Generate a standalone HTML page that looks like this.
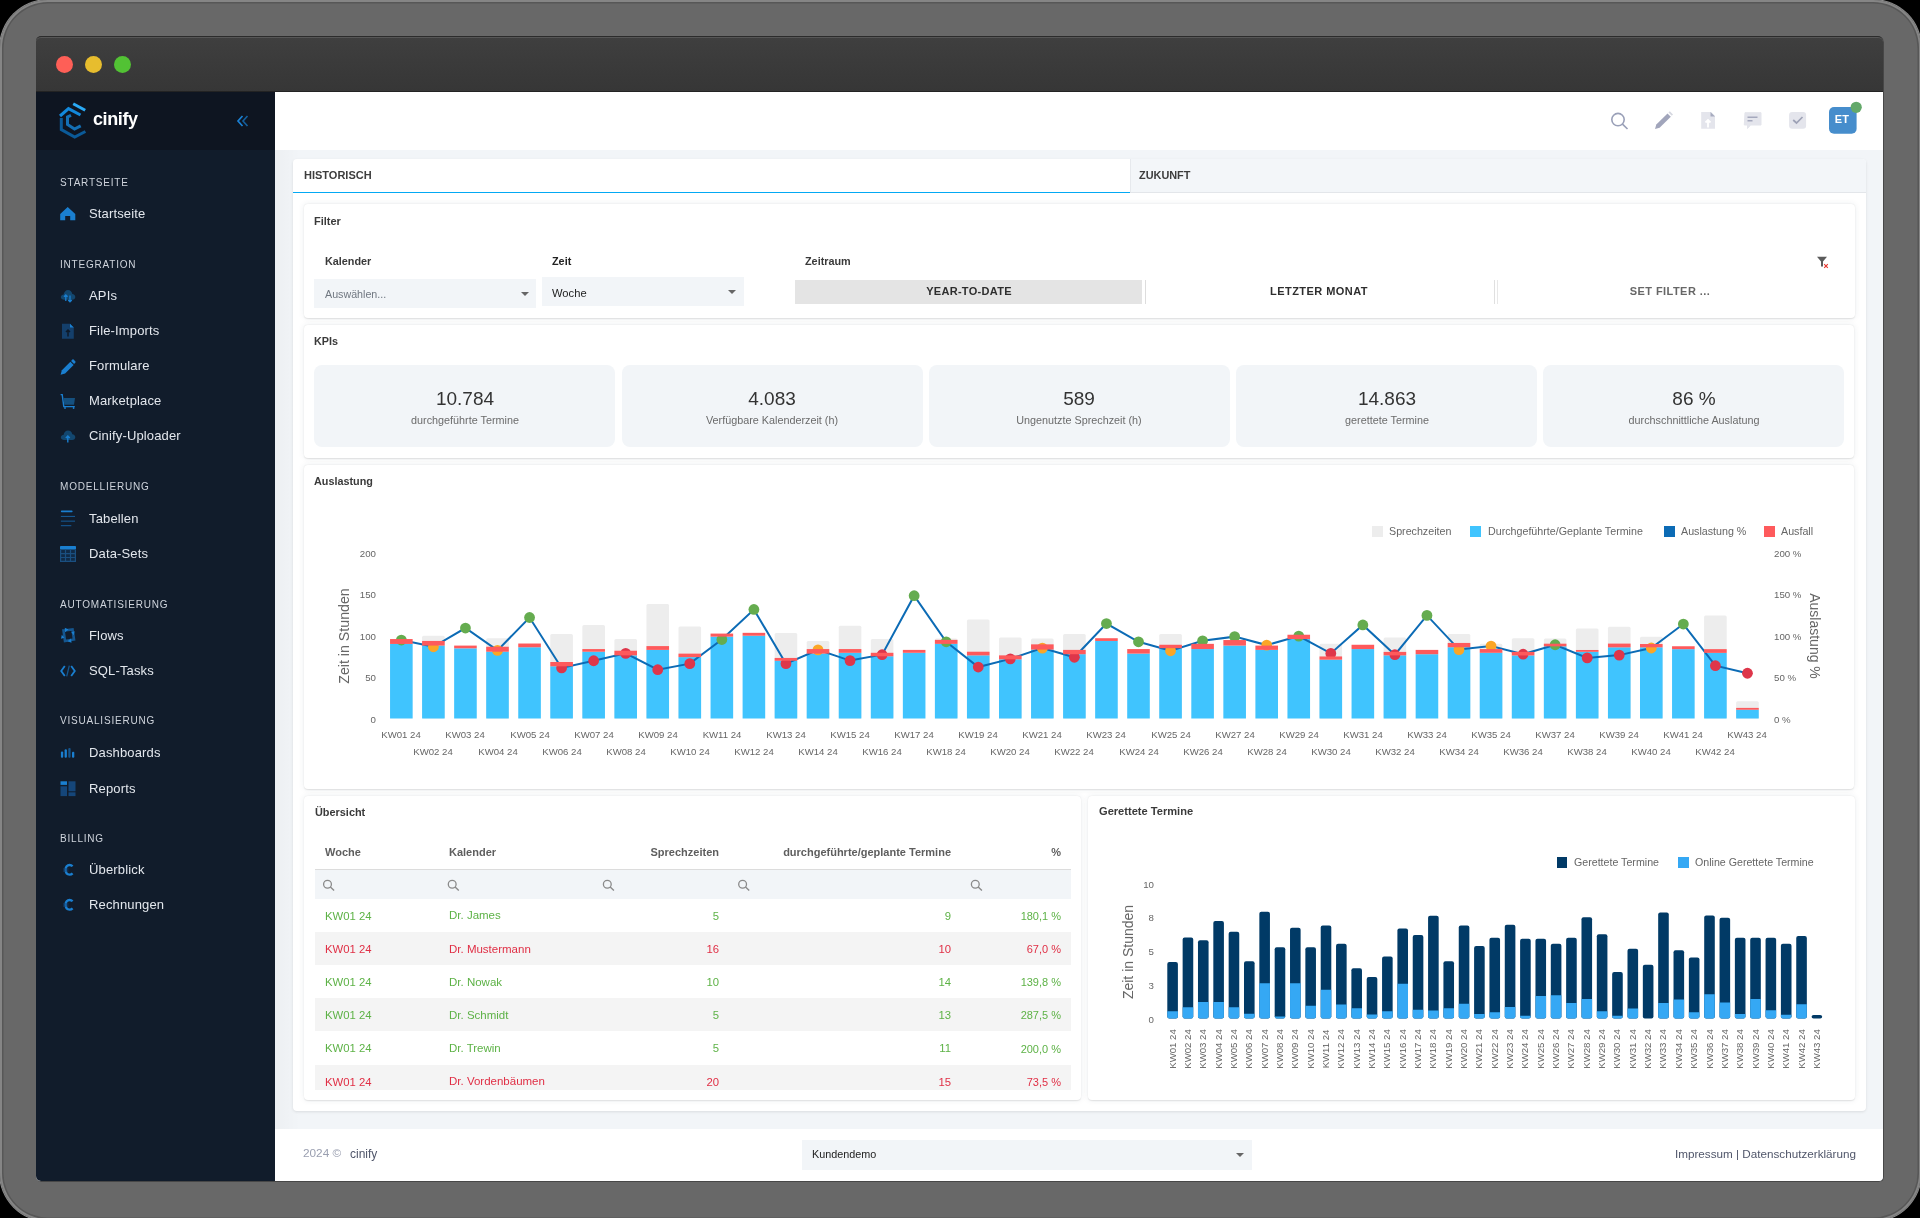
<!DOCTYPE html><html><head><meta charset="utf-8"><style>
*{margin:0;padding:0;box-sizing:border-box}
html,body{width:1920px;height:1218px;overflow:hidden;background:#000;font-family:"Liberation Sans", sans-serif}
.t{position:absolute;white-space:nowrap;will-change:transform}
.r{position:absolute}
svg{position:absolute}
</style></head><body>
<div class="r" style="left:0px;top:0px;width:1921px;height:1221px;background:#686868;border-radius:48px;box-shadow:0 0 0 1px rgba(255,255,255,0.55), inset 0 0 0 2px #858585, inset 0 0 0 3.5px #575757;"></div><div class="r" style="left:36px;top:37px;width:1848px;height:1145px;background:#f2f5f8;border-radius:5px;overflow:hidden;border-right:1px solid #474747;border-bottom:1px solid #474747;"></div><div class="r" style="left:36px;top:36px;width:1847px;height:55.5px;background:linear-gradient(#3f3f3f,#363636);border-radius:5px 5px 0 0;border-top:1px solid #2b2b2b;box-shadow:inset 0 1px 0 #565656, inset 0 -1px 0 #232323;"></div><div class="r" style="left:55.5px;top:55.5px;width:17.0px;height:17.0px;background:#fe5f57;border-radius:50%;"></div><div class="r" style="left:84.5px;top:55.5px;width:17.0px;height:17.0px;background:#e7bd2e;border-radius:50%;"></div><div class="r" style="left:113.5px;top:55.5px;width:17.0px;height:17.0px;background:#52c234;border-radius:50%;"></div><div class="r" style="left:36px;top:91.5px;width:239px;height:1089.5px;background:#111c2b;border-bottom-left-radius:5px;"></div><div class="r" style="left:36px;top:91.5px;width:239px;height:58.5px;background:#0e1521;"></div><div class="r" style="left:275px;top:150px;width:25px;height:978.5px;background:linear-gradient(90deg,rgba(0,0,0,0.025),rgba(0,0,0,0));"></div><div class="r" style="left:275px;top:91.5px;width:1608px;height:58.5px;background:#ffffff;"></div><div class="r" style="left:275px;top:1128.5px;width:1608px;height:52.5px;background:#ffffff;border-bottom-right-radius:5px;"></div><svg style="left:56px;top:100px" width="34" height="42" viewBox="56 100 34 42">
<path d="M73.2 103.8 L85.2 110.3" stroke="#2aaaf5" stroke-width="3" fill="none"/>
<path d="M60 116 L68.5 108.6 L80.5 115" stroke="#1289dc" stroke-width="3" fill="none"/>
<path d="M61.3 118 L61.3 129.5 L74.7 137 L85.4 131.5" stroke="#0b5a98" stroke-width="3" fill="none"/>
<path d="M71 115.3 L67.5 117 L67.5 124.5 L74.5 129 L80.7 125.8" stroke="#1470b5" stroke-width="3" fill="none"/>
</svg><div class="t" style="top:110.46px;font-size:18px;line-height:18px;color:#ffffff;font-weight:bold;letter-spacing:-0.4px;left:93.00px;">cinify</div><svg style="left:235px;top:113px" width="16" height="16" viewBox="0 0 16 16">
<path d="M7.5 3 L3 8 L7.5 13" stroke="#1a80d4" stroke-width="1.7" fill="none"/><path d="M12.5 3 L8 8 L12.5 13" stroke="#15609e" stroke-width="1.6" fill="none"/>
</svg><div class="t" style="top:177.53px;font-size:10px;line-height:10px;color:#cfd4dc;letter-spacing:0.8px;left:59.60px;">STARTSEITE</div><div class="t" style="top:207.00px;font-size:13px;line-height:13px;color:#e3e7ed;letter-spacing:0.15px;left:88.80px;">Startseite</div><svg style="left:60px;top:205.2px" width="16" height="18" viewBox="0 0 16 18" overflow="visible"><path d="M0.2 9 L7.7 2 L15.3 9 L15.3 15.3 L10.2 15.3 L10.2 11 L5.2 11 L5.2 15.3 L0.2 15.3 Z" fill="#1a7fd0"/></svg><div class="t" style="top:259.84px;font-size:10px;line-height:10px;color:#cfd4dc;letter-spacing:0.8px;left:59.60px;">INTEGRATION</div><div class="t" style="top:289.00px;font-size:13px;line-height:13px;color:#e3e7ed;letter-spacing:0.15px;left:88.80px;">APIs</div><svg style="left:60px;top:287.2px" width="16" height="18" viewBox="0 0 16 18" overflow="visible"><path d="M3.8 12.8 C1.3 12.8 0.6 10.8 0.9 9.6 C1.3 8.3 2.5 7.7 3.5 7.8 C3.9 5.1 5.7 3 8 3 C10.3 3 12 4.8 12.3 7 C14 7.1 15.3 8.3 15.3 10 C15.3 11.6 14 12.8 12.4 12.8 Z" fill="#13476f"/><path d="M5.8 14 L5.8 8 M4 9.8 L5.8 8 L7.6 9.8 M10 8.5 L10 14.8 M8.2 13 L10 14.8 L11.8 13" stroke="#1a7fd0" stroke-width="1.3" fill="none"/></svg><div class="t" style="top:324.00px;font-size:13px;line-height:13px;color:#e3e7ed;letter-spacing:0.15px;left:88.80px;">File-Imports</div><svg style="left:60px;top:322.2px" width="16" height="18" viewBox="0 0 16 18" overflow="visible"><path d="M2 1.8 L10 1.8 L13.8 5.6 L13.8 16.7 L2 16.7 Z" fill="#143f6b"/><path d="M10 1.8 L13.8 5.6 L10 5.6 Z" fill="#1a7fd0"/><path d="M8 14.5 L8 8 M6 10 L8 8 L10 10" stroke="#0e1a29" stroke-width="1.5" fill="none"/></svg><div class="t" style="top:359.30px;font-size:13px;line-height:13px;color:#e3e7ed;letter-spacing:0.15px;left:88.80px;">Formulare</div><svg style="left:60px;top:357.5px" width="16" height="18" viewBox="0 0 16 18" overflow="visible"><path d="M0.6 16.7 L1.87 12.17 L10.37 3.67 L13.63 6.93 L5.13 15.43 Z" fill="#1a7fd0"/><path d="M11.1 2.9 L12.4 1.6 Q13 1 13.6 1.6 L15.4 3.4 Q16 4 15.4 4.6 L14.1 5.9 Z" fill="#1a7fd0"/></svg><div class="t" style="top:393.70px;font-size:13px;line-height:13px;color:#e3e7ed;letter-spacing:0.15px;left:88.80px;">Marketplace</div><svg style="left:60px;top:391.9px" width="16" height="18" viewBox="0 0 16 18" overflow="visible"><path d="M0.6 2.6 L2.2 2.6 L3.8 14.6 L14.8 14.6" stroke="#1a7fd0" stroke-width="1.4" fill="none"/><path d="M3.4 6 L15 6 L14 12.8 L4.3 12.8 Z" fill="#15507f"/><circle cx="5" cy="16" r="0.9" fill="#1a7fd0"/><circle cx="13.6" cy="16" r="0.9" fill="#1a7fd0"/></svg><div class="t" style="top:429.00px;font-size:13px;line-height:13px;color:#e3e7ed;letter-spacing:0.15px;left:88.80px;">Cinify-Uploader</div><svg style="left:60px;top:427.2px" width="16" height="18" viewBox="0 0 16 18" overflow="visible"><path d="M3.8 13 C1.3 13 0.6 11 0.9 9.8 C1.3 8.5 2.5 7.9 3.5 8 C3.9 5.3 5.7 3.5 8 3.5 C10.3 3.5 12 5.2 12.3 7.3 C14 7.4 15.3 8.6 15.3 10.2 C15.3 11.8 14 13 12.4 13 Z" fill="#13476f"/><path d="M7.8 15.5 L7.8 9 M5.8 11 L7.8 9 L9.8 11" stroke="#1a7fd0" stroke-width="1.4" fill="none"/></svg><div class="t" style="top:481.54px;font-size:10px;line-height:10px;color:#cfd4dc;letter-spacing:0.8px;left:59.60px;">MODELLIERUNG</div><div class="t" style="top:512.00px;font-size:13px;line-height:13px;color:#e3e7ed;letter-spacing:0.15px;left:88.80px;">Tabellen</div><svg style="left:60px;top:510.2px" width="16" height="18" viewBox="0 0 16 18" overflow="visible"><rect x="0.9" y="0.6" width="11.7" height="1.6" rx="0.8" fill="#1a7fd0"/><rect x="0.9" y="5.9" width="14.1" height="1.1" fill="#15568f"/><rect x="0.9" y="10.6" width="14.1" height="1.1" fill="#15568f"/><rect x="0.9" y="15.1" width="10.4" height="1.1" fill="#15568f"/></svg><div class="t" style="top:547.00px;font-size:13px;line-height:13px;color:#e3e7ed;letter-spacing:0.15px;left:88.80px;">Data-Sets</div><svg style="left:60px;top:545.2px" width="16" height="18" viewBox="0 0 16 18" overflow="visible"><rect x="0" y="1.2" width="16" height="15.8" rx="1" fill="#102a46"/><rect x="0" y="1" width="16" height="3.6" rx="0.8" fill="#1a7fd0"/><path d="M0.6 4.6 L0.6 16.4 L15.4 16.4 L15.4 4.6 M0.6 8.6 L15.4 8.6 M0.6 12.5 L15.4 12.5 M5.5 4.6 L5.5 16.4 M10.5 4.6 L10.5 16.4" stroke="#1a4f80" stroke-width="1.2" fill="none"/></svg><div class="t" style="top:599.53px;font-size:10px;line-height:10px;color:#cfd4dc;letter-spacing:0.8px;left:59.60px;">AUTOMATISIERUNG</div><div class="t" style="top:629.00px;font-size:13px;line-height:13px;color:#e3e7ed;letter-spacing:0.15px;left:88.80px;">Flows</div><svg style="left:60px;top:627.2px" width="16" height="18" viewBox="0 0 16 18" overflow="visible"><path d="M3.5 3.5 L12.5 2.5 L14 12.5 L5 14 Z" fill="none" stroke="#15568f" stroke-width="2.6"/><path d="M4.8 0.8 L8.5 2.6 L5 5.2 Z M14.6 4.2 L13.8 8.2 L11.3 5.2 Z M11.5 15.8 L7.5 14.2 L11 11.5 Z M1 11.8 L1.8 7.8 L4.4 10.8 Z" fill="#1a7fd0"/></svg><div class="t" style="top:664.00px;font-size:13px;line-height:13px;color:#e3e7ed;letter-spacing:0.15px;left:88.80px;">SQL-Tasks</div><svg style="left:60px;top:662.2px" width="16" height="18" viewBox="0 0 16 18" overflow="visible"><path d="M4.8 4 L1.2 9 L4.8 14" stroke="#1a7fd0" stroke-width="1.8" fill="none"/><path d="M11.2 4 L14.8 9 L11.2 14" stroke="#1a7fd0" stroke-width="1.8" fill="none"/><path d="M9.3 3.6 L6.7 14.3" stroke="#15568f" stroke-width="1.3"/></svg><div class="t" style="top:716.24px;font-size:10px;line-height:10px;color:#cfd4dc;letter-spacing:0.8px;left:59.60px;">VISUALISIERUNG</div><div class="t" style="top:746.00px;font-size:13px;line-height:13px;color:#e3e7ed;letter-spacing:0.15px;left:88.80px;">Dashboards</div><svg style="left:60px;top:744.2px" width="16" height="18" viewBox="0 0 16 18" overflow="visible"><rect x="0.9" y="7.6" width="2.3" height="6.2" rx="1" fill="#1a7fd0"/><rect x="4.6" y="5.3" width="2.3" height="8.5" rx="1" fill="#1a7fd0"/><rect x="8.3" y="3.9" width="2.3" height="9.9" rx="1" fill="#15568f"/><rect x="12" y="7.8" width="2.3" height="6" rx="1" fill="#1a7fd0"/></svg><div class="t" style="top:781.50px;font-size:13px;line-height:13px;color:#e3e7ed;letter-spacing:0.15px;left:88.80px;">Reports</div><svg style="left:60px;top:779.7px" width="16" height="18" viewBox="0 0 16 18" overflow="visible"><rect x="0.5" y="1.3" width="6.5" height="3.6" fill="#1a7fd0"/><rect x="0.5" y="6.3" width="6.5" height="9.8" fill="#15467a"/><rect x="8.5" y="1.3" width="7" height="10" fill="#15467a"/><rect x="8.5" y="12.3" width="7" height="3.8" fill="#15467a"/></svg><div class="t" style="top:833.53px;font-size:10px;line-height:10px;color:#cfd4dc;letter-spacing:0.8px;left:59.60px;">BILLING</div><div class="t" style="top:863.00px;font-size:13px;line-height:13px;color:#e3e7ed;letter-spacing:0.15px;left:88.80px;">Überblick</div><svg style="left:60px;top:861.2px" width="16" height="18" viewBox="0 0 16 18" overflow="visible"><path d="M12.6 5.2 C11.8 4.4 10.8 4 9.6 4 C7.2 4 5.6 6 5.6 8.8 C5.6 11.6 7.2 13.6 9.6 13.6 C10.8 13.6 11.8 13.2 12.6 12.4" stroke="#1a7fd0" stroke-width="2.3" fill="none"/><path d="M3 8 L8.5 8 M3 10 L8.5 10" stroke="#15467a" stroke-width="0.9"/></svg><div class="t" style="top:898.00px;font-size:13px;line-height:13px;color:#e3e7ed;letter-spacing:0.15px;left:88.80px;">Rechnungen</div><svg style="left:60px;top:896.2px" width="16" height="18" viewBox="0 0 16 18" overflow="visible"><path d="M12.6 5.2 C11.8 4.4 10.8 4 9.6 4 C7.2 4 5.6 6 5.6 8.8 C5.6 11.6 7.2 13.6 9.6 13.6 C10.8 13.6 11.8 13.2 12.6 12.4" stroke="#1a7fd0" stroke-width="2.3" fill="none"/><path d="M3 8 L8.5 8 M3 10 L8.5 10" stroke="#15467a" stroke-width="0.9"/></svg><svg style="left:1600px;top:100px" width="270" height="40" viewBox="1600 100 270 40">
<circle cx="1618" cy="119.6" r="6.2" stroke="#9aa0b8" stroke-width="1.6" fill="none"/>
<path d="M1622.5 124.2 L1627.5 129" stroke="#9aa0b8" stroke-width="1.6"/>
<path d="M1655 129 L1656.3 124.5 L1667.5 113.5 L1670.8 116.8 L1659.6 127.8 Z" fill="#a1a5bb"/>
<path d="M1668.5 112.5 L1669.8 111.2 L1673 114.4 L1671.8 115.7 Z" fill="#d5d7e0"/>
<path d="M1701.2 112 L1711 112 L1715 116 L1715 128.8 L1701.2 128.8 Z" fill="#e4e5ec"/>
<path d="M1710.5 112 L1715 116.5 L1710.5 116.5 Z" fill="#a7abbf"/>
<path d="M1708 127.5 L1708 120 M1705.5 122.5 L1708 120 L1710.5 122.5" stroke="#ffffff" stroke-width="1.8" fill="none"/>
<path d="M1745 112.7 L1761 112.7 L1761 125 L1750.5 125 L1747.5 128.5 L1747.5 125 L1744.3 125 Z" fill="#e4e5ec" stroke="#e4e5ec" stroke-width="1" stroke-linejoin="round"/>
<path d="M1747.5 117.3 L1757.5 117.3 M1747.5 120.7 L1752.5 120.7" stroke="#a5a9bd" stroke-width="1.4"/>
<rect x="1789.1" y="112" width="17" height="16.8" rx="3" fill="#e4e5ec"/>
<path d="M1793.2 120 L1796.5 123 L1802.5 117" stroke="#9ea2b6" stroke-width="1.7" fill="none"/>
<rect x="1829" y="107" width="27.6" height="26.8" rx="5" fill="#468dcc"/>
<circle cx="1856.2" cy="107.3" r="5.6" fill="#63a96a"/>
</svg><div class="t" style="top:114.49px;font-size:11px;line-height:11px;color:#ffffff;font-weight:bold;letter-spacing:0.2px;left:1827.40px;width:30px;text-align:center;">ET</div><div class="r" style="left:293px;top:158.8px;width:1572.6px;height:952.0px;background:#ffffff;border-radius:4px;box-shadow:0 1px 3px rgba(0,0,0,0.10);"></div><div class="r" style="left:1129.5px;top:158.8px;width:736.0999999999999px;height:33.69999999999999px;background:#f3f6f9;border-left:1px solid #e6e9ed;border-radius:0 4px 0 0;"></div><div class="r" style="left:293px;top:191.8px;width:836.5px;height:1.1999999999999886px;background:#03a9f4;"></div><div class="r" style="left:1129.5px;top:192px;width:736.0999999999999px;height:1px;background:#e3e6ea;"></div><div class="t" style="top:170.29px;font-size:11px;line-height:11px;color:#3d3d3d;font-weight:bold;left:303.70px;">HISTORISCH</div><div class="t" style="top:169.87px;font-size:10.9px;line-height:10.9px;color:#3d3d3d;font-weight:bold;left:1139.20px;">ZUKUNFT</div><div class="r" style="left:303.7px;top:204px;width:1551.1px;height:114px;background:#ffffff;border-radius:4px;box-shadow:0 0 6px rgba(40,55,80,0.085), 0 0.5px 1.5px rgba(0,0,0,0.10);"></div><div class="t" style="top:216.39px;font-size:11px;line-height:11px;color:#3a3a3a;font-weight:bold;left:314.30px;">Filter</div><div class="t" style="top:256.12px;font-size:10.84px;line-height:10.84px;color:#3a3a3a;font-weight:bold;left:324.60px;">Kalender</div><div class="t" style="top:255.62px;font-size:10.84px;line-height:10.84px;color:#222;font-weight:bold;left:552.00px;">Zeit</div><div class="t" style="top:255.82px;font-size:10.84px;line-height:10.84px;color:#3a3a3a;font-weight:bold;left:804.70px;">Zeitraum</div><div class="r" style="left:314.3px;top:279.1px;width:222.09999999999997px;height:28.5px;background:#f2f5f8;"></div><div class="t" style="top:288.74px;font-size:10.7px;line-height:10.7px;color:#707780;left:324.60px;">Auswählen...</div><div class="r" style="left:542px;top:277.4px;width:202px;height:28.5px;background:#f2f5f8;"></div><div class="t" style="top:288.02px;font-size:11.2px;line-height:11.2px;color:#222;left:552.00px;">Woche</div><svg style="left:519.8px;top:290.6px" width="10" height="6" viewBox="0 0 10 6"><path d="M1 1 L9 1 L5 5 Z" fill="#666"/></svg><svg style="left:727.3px;top:288.6px" width="10" height="6" viewBox="0 0 10 6"><path d="M1 1 L9 1 L5 5 Z" fill="#666"/></svg><div class="r" style="left:795.2px;top:279.5px;width:346.70000000000005px;height:24.30000000000001px;background:#e4e4e4;"></div><div class="t" style="top:286.39px;font-size:11px;line-height:11px;color:#2e2e2e;font-weight:bold;letter-spacing:0.3px;left:818.50px;width:300px;text-align:center;">YEAR-TO-DATE</div><div class="r" style="left:1145px;top:280px;width:1px;height:24px;background:#dddddd;"></div><div class="t" style="top:286.39px;font-size:11px;line-height:11px;color:#2e2e2e;font-weight:bold;letter-spacing:0.45px;left:1168.70px;width:300px;text-align:center;">LETZTER MONAT</div><div class="r" style="left:1494px;top:280px;width:1px;height:24px;background:#e0e0e0;"></div><div class="r" style="left:1497px;top:280px;width:1px;height:24px;background:#e8e8e8;"></div><div class="t" style="top:286.39px;font-size:11px;line-height:11px;color:#676767;font-weight:bold;letter-spacing:0.45px;left:1520.40px;width:300px;text-align:center;">SET FILTER ...</div><svg style="left:1812px;top:252px" width="20" height="20" viewBox="1812 252 20 20">
<path d="M1817 256.8 L1827 256.8 L1823 261.5 L1823 266.5 L1821 266.5 L1821 261.5 Z" fill="#5b5b5b"/>
<path d="M1824.2 264.2 L1827.8 267.8 M1827.8 264.2 L1824.2 267.8" stroke="#e8342c" stroke-width="1.1"/>
</svg><div class="r" style="left:303.5px;top:325px;width:1550.5px;height:132.60000000000002px;background:#ffffff;border-radius:4px;box-shadow:0 0 6px rgba(40,55,80,0.085), 0 0.5px 1.5px rgba(0,0,0,0.10);"></div><div class="t" style="top:336.06px;font-size:10.8px;line-height:10.8px;color:#3a3a3a;font-weight:bold;left:314.40px;">KPIs</div><div class="r" style="left:314.4px;top:365.3px;width:301.0px;height:81.5px;background:#f2f5f8;border-radius:8px;"></div><div class="t" style="top:388.82px;font-size:19px;line-height:19px;color:#333333;left:314.90px;width:300px;text-align:center;">10.784</div><div class="t" style="top:415.06px;font-size:10.8px;line-height:10.8px;color:#6b6b6b;left:314.90px;width:300px;text-align:center;">durchgeführte Termine</div><div class="r" style="left:621.6px;top:365.3px;width:301.0px;height:81.5px;background:#f2f5f8;border-radius:8px;"></div><div class="t" style="top:388.82px;font-size:19px;line-height:19px;color:#333333;left:622.10px;width:300px;text-align:center;">4.083</div><div class="t" style="top:415.06px;font-size:10.8px;line-height:10.8px;color:#6b6b6b;left:622.10px;width:300px;text-align:center;">Verfügbare Kalenderzeit (h)</div><div class="r" style="left:928.8px;top:365.3px;width:301.0px;height:81.5px;background:#f2f5f8;border-radius:8px;"></div><div class="t" style="top:388.82px;font-size:19px;line-height:19px;color:#333333;left:929.30px;width:300px;text-align:center;">589</div><div class="t" style="top:415.06px;font-size:10.8px;line-height:10.8px;color:#6b6b6b;left:929.30px;width:300px;text-align:center;">Ungenutzte Sprechzeit (h)</div><div class="r" style="left:1236.0px;top:365.3px;width:301.0px;height:81.5px;background:#f2f5f8;border-radius:8px;"></div><div class="t" style="top:388.82px;font-size:19px;line-height:19px;color:#333333;left:1236.50px;width:300px;text-align:center;">14.863</div><div class="t" style="top:415.06px;font-size:10.8px;line-height:10.8px;color:#6b6b6b;left:1236.50px;width:300px;text-align:center;">gerettete Termine</div><div class="r" style="left:1543.2px;top:365.3px;width:301.0px;height:81.5px;background:#f2f5f8;border-radius:8px;"></div><div class="t" style="top:388.82px;font-size:19px;line-height:19px;color:#333333;left:1543.70px;width:300px;text-align:center;">86 %</div><div class="t" style="top:415.06px;font-size:10.8px;line-height:10.8px;color:#6b6b6b;left:1543.70px;width:300px;text-align:center;">durchschnittliche Auslatung</div><div class="r" style="left:304px;top:465px;width:1550px;height:323.70000000000005px;background:#ffffff;border-radius:4px;box-shadow:0 0 6px rgba(40,55,80,0.085), 0 0.5px 1.5px rgba(0,0,0,0.10);"></div><div class="t" style="top:475.54px;font-size:10.82px;line-height:10.82px;color:#3a3a3a;font-weight:bold;left:314.00px;">Auslastung</div><svg style="left:0;top:0" width="1920" height="1218" viewBox="0 0 1920 1218"><rect x="422.10" y="635.73" width="22.6" height="82.77" rx="1.5" fill="#ededed"/><rect x="486.20" y="638.14" width="22.6" height="80.36" rx="1.5" fill="#ededed"/><rect x="550.30" y="633.99" width="22.6" height="84.51" rx="1.5" fill="#ededed"/><rect x="582.35" y="624.88" width="22.6" height="93.62" rx="1.5" fill="#ededed"/><rect x="614.40" y="639.05" width="22.6" height="79.45" rx="1.5" fill="#ededed"/><rect x="646.45" y="603.92" width="22.6" height="114.58" rx="1.5" fill="#ededed"/><rect x="678.50" y="626.62" width="22.6" height="91.88" rx="1.5" fill="#ededed"/><rect x="774.65" y="633.00" width="22.6" height="85.50" rx="1.5" fill="#ededed"/><rect x="806.70" y="640.95" width="22.6" height="77.55" rx="1.5" fill="#ededed"/><rect x="838.75" y="625.79" width="22.6" height="92.71" rx="1.5" fill="#ededed"/><rect x="870.80" y="639.05" width="22.6" height="79.45" rx="1.5" fill="#ededed"/><rect x="934.90" y="638.38" width="22.6" height="80.12" rx="1.5" fill="#ededed"/><rect x="966.95" y="619.49" width="22.6" height="99.01" rx="1.5" fill="#ededed"/><rect x="999.00" y="637.47" width="22.6" height="81.03" rx="1.5" fill="#ededed"/><rect x="1031.05" y="638.38" width="22.6" height="80.12" rx="1.5" fill="#ededed"/><rect x="1063.10" y="633.91" width="22.6" height="84.59" rx="1.5" fill="#ededed"/><rect x="1159.25" y="633.91" width="22.6" height="84.59" rx="1.5" fill="#ededed"/><rect x="1319.50" y="643.85" width="22.6" height="74.65" rx="1.5" fill="#ededed"/><rect x="1383.60" y="637.47" width="22.6" height="81.03" rx="1.5" fill="#ededed"/><rect x="1447.70" y="633.91" width="22.6" height="84.59" rx="1.5" fill="#ededed"/><rect x="1479.75" y="643.85" width="22.6" height="74.65" rx="1.5" fill="#ededed"/><rect x="1511.80" y="638.22" width="22.6" height="80.28" rx="1.5" fill="#ededed"/><rect x="1543.85" y="638.38" width="22.6" height="80.12" rx="1.5" fill="#ededed"/><rect x="1575.90" y="628.44" width="22.6" height="90.06" rx="1.5" fill="#ededed"/><rect x="1607.95" y="626.70" width="22.6" height="91.80" rx="1.5" fill="#ededed"/><rect x="1640.00" y="636.64" width="22.6" height="81.86" rx="1.5" fill="#ededed"/><rect x="1704.10" y="615.60" width="22.6" height="102.90" rx="1.5" fill="#ededed"/><rect x="1736.15" y="701.18" width="22.6" height="17.32" rx="1.5" fill="#ededed"/><rect x="390.05" y="643.93" width="22.6" height="74.57" fill="#40c4fe"/><rect x="422.10" y="645.59" width="22.6" height="72.91" fill="#40c4fe"/><rect x="454.15" y="648.33" width="22.6" height="70.17" fill="#40c4fe"/><rect x="486.20" y="651.72" width="22.6" height="66.78" fill="#40c4fe"/><rect x="518.25" y="647.25" width="22.6" height="71.25" fill="#40c4fe"/><rect x="550.30" y="666.30" width="22.6" height="52.20" fill="#40c4fe"/><rect x="582.35" y="651.72" width="22.6" height="66.78" fill="#40c4fe"/><rect x="614.40" y="655.37" width="22.6" height="63.13" fill="#40c4fe"/><rect x="646.45" y="649.90" width="22.6" height="68.60" fill="#40c4fe"/><rect x="678.50" y="657.11" width="22.6" height="61.39" fill="#40c4fe"/><rect x="710.55" y="636.64" width="22.6" height="81.86" fill="#40c4fe"/><rect x="742.60" y="635.73" width="22.6" height="82.77" fill="#40c4fe"/><rect x="774.65" y="660.75" width="22.6" height="57.75" fill="#40c4fe"/><rect x="806.70" y="653.63" width="22.6" height="64.87" fill="#40c4fe"/><rect x="838.75" y="652.80" width="22.6" height="65.70" fill="#40c4fe"/><rect x="870.80" y="656.28" width="22.6" height="62.22" fill="#40c4fe"/><rect x="902.85" y="652.80" width="22.6" height="65.70" fill="#40c4fe"/><rect x="934.90" y="643.85" width="22.6" height="74.65" fill="#40c4fe"/><rect x="966.95" y="655.37" width="22.6" height="63.13" fill="#40c4fe"/><rect x="999.00" y="659.35" width="22.6" height="59.15" fill="#40c4fe"/><rect x="1031.05" y="649.57" width="22.6" height="68.93" fill="#40c4fe"/><rect x="1063.10" y="654.21" width="22.6" height="64.29" fill="#40c4fe"/><rect x="1095.15" y="640.95" width="22.6" height="77.55" fill="#40c4fe"/><rect x="1127.20" y="653.63" width="22.6" height="64.87" fill="#40c4fe"/><rect x="1159.25" y="648.16" width="22.6" height="70.34" fill="#40c4fe"/><rect x="1191.30" y="649.07" width="22.6" height="69.43" fill="#40c4fe"/><rect x="1223.35" y="645.59" width="22.6" height="72.91" fill="#40c4fe"/><rect x="1255.40" y="649.90" width="22.6" height="68.60" fill="#40c4fe"/><rect x="1287.45" y="639.05" width="22.6" height="79.45" fill="#40c4fe"/><rect x="1319.50" y="659.68" width="22.6" height="58.82" fill="#40c4fe"/><rect x="1351.55" y="649.07" width="22.6" height="69.43" fill="#40c4fe"/><rect x="1383.60" y="655.37" width="22.6" height="63.13" fill="#40c4fe"/><rect x="1415.65" y="654.21" width="22.6" height="64.29" fill="#40c4fe"/><rect x="1447.70" y="647.25" width="22.6" height="71.25" fill="#40c4fe"/><rect x="1479.75" y="652.80" width="22.6" height="65.70" fill="#40c4fe"/><rect x="1511.80" y="655.45" width="22.6" height="63.05" fill="#40c4fe"/><rect x="1543.85" y="646.34" width="22.6" height="72.16" fill="#40c4fe"/><rect x="1575.90" y="651.81" width="22.6" height="66.69" fill="#40c4fe"/><rect x="1607.95" y="647.33" width="22.6" height="71.17" fill="#40c4fe"/><rect x="1640.00" y="647.33" width="22.6" height="71.17" fill="#40c4fe"/><rect x="1672.05" y="649.15" width="22.6" height="69.35" fill="#40c4fe"/><rect x="1704.10" y="652.88" width="22.6" height="65.62" fill="#40c4fe"/><rect x="1736.15" y="709.72" width="22.6" height="8.78" fill="#40c4fe"/><polyline points="401.35,640.04 433.40,646.75 465.45,628.03 497.50,650.40 529.55,617.51 561.60,667.96 593.65,660.75 625.70,653.38 657.75,669.70 689.80,663.65 721.85,639.54 753.90,609.47 785.95,663.65 818.00,649.90 850.05,660.59 882.10,654.71 914.15,595.72 946.20,641.78 978.25,667.05 1010.30,658.85 1042.35,648.16 1074.40,657.27 1106.45,623.55 1138.50,641.78 1170.55,650.73 1202.60,640.79 1234.65,636.64 1266.70,645.09 1298.75,636.15 1330.80,653.38 1362.85,624.96 1394.90,654.71 1426.95,615.43 1459.00,649.57 1491.05,646.09 1523.10,654.21 1555.15,644.76 1587.20,657.94 1619.25,655.12 1651.30,647.99 1683.35,624.05 1715.40,665.72 1747.45,673.26" fill="none" stroke="#0c6bb5" stroke-width="2"/><circle cx="401.35" cy="640.04" r="5.4" fill="#65ac4f"/><circle cx="433.40" cy="646.75" r="5.4" fill="#fba626"/><circle cx="465.45" cy="628.03" r="5.4" fill="#65ac4f"/><circle cx="497.50" cy="650.40" r="5.4" fill="#fba626"/><circle cx="529.55" cy="617.51" r="5.4" fill="#65ac4f"/><circle cx="561.60" cy="667.96" r="5.4" fill="#de364a"/><circle cx="593.65" cy="660.75" r="5.4" fill="#de364a"/><circle cx="625.70" cy="653.38" r="5.4" fill="#de364a"/><circle cx="657.75" cy="669.70" r="5.4" fill="#de364a"/><circle cx="689.80" cy="663.65" r="5.4" fill="#de364a"/><circle cx="721.85" cy="639.54" r="5.4" fill="#65ac4f"/><circle cx="753.90" cy="609.47" r="5.4" fill="#65ac4f"/><circle cx="785.95" cy="663.65" r="5.4" fill="#de364a"/><circle cx="818.00" cy="649.90" r="5.4" fill="#fba626"/><circle cx="850.05" cy="660.59" r="5.4" fill="#de364a"/><circle cx="882.10" cy="654.71" r="5.4" fill="#de364a"/><circle cx="914.15" cy="595.72" r="5.4" fill="#65ac4f"/><circle cx="946.20" cy="641.78" r="5.4" fill="#65ac4f"/><circle cx="978.25" cy="667.05" r="5.4" fill="#de364a"/><circle cx="1010.30" cy="658.85" r="5.4" fill="#de364a"/><circle cx="1042.35" cy="648.16" r="5.4" fill="#fba626"/><circle cx="1074.40" cy="657.27" r="5.4" fill="#de364a"/><circle cx="1106.45" cy="623.55" r="5.4" fill="#65ac4f"/><circle cx="1138.50" cy="641.78" r="5.4" fill="#65ac4f"/><circle cx="1170.55" cy="650.73" r="5.4" fill="#fba626"/><circle cx="1202.60" cy="640.79" r="5.4" fill="#65ac4f"/><circle cx="1234.65" cy="636.64" r="5.4" fill="#65ac4f"/><circle cx="1266.70" cy="645.09" r="5.4" fill="#fba626"/><circle cx="1298.75" cy="636.15" r="5.4" fill="#65ac4f"/><circle cx="1330.80" cy="653.38" r="5.4" fill="#de364a"/><circle cx="1362.85" cy="624.96" r="5.4" fill="#65ac4f"/><circle cx="1394.90" cy="654.71" r="5.4" fill="#de364a"/><circle cx="1426.95" cy="615.43" r="5.4" fill="#65ac4f"/><circle cx="1459.00" cy="649.57" r="5.4" fill="#fba626"/><circle cx="1491.05" cy="646.09" r="5.4" fill="#fba626"/><circle cx="1523.10" cy="654.21" r="5.4" fill="#de364a"/><circle cx="1555.15" cy="644.76" r="5.4" fill="#65ac4f"/><circle cx="1587.20" cy="657.94" r="5.4" fill="#de364a"/><circle cx="1619.25" cy="655.12" r="5.4" fill="#de364a"/><circle cx="1651.30" cy="647.99" r="5.4" fill="#fba626"/><circle cx="1683.35" cy="624.05" r="5.4" fill="#65ac4f"/><circle cx="1715.40" cy="665.72" r="5.4" fill="#de364a"/><circle cx="1747.45" cy="673.26" r="5.4" fill="#de364a"/><rect x="390.05" y="639.05" width="22.6" height="4.89" fill="#fe5a5c"/><rect x="422.10" y="640.95" width="22.6" height="4.64" fill="#fe5a5c"/><rect x="454.15" y="645.59" width="22.6" height="2.73" fill="#fe5a5c"/><rect x="486.20" y="646.75" width="22.6" height="4.97" fill="#fe5a5c"/><rect x="518.25" y="643.52" width="22.6" height="3.73" fill="#fe5a5c"/><rect x="550.30" y="662.00" width="22.6" height="4.31" fill="#fe5a5c"/><rect x="582.35" y="649.07" width="22.6" height="2.65" fill="#fe5a5c"/><rect x="614.40" y="650.73" width="22.6" height="4.64" fill="#fe5a5c"/><rect x="646.45" y="646.09" width="22.6" height="3.81" fill="#fe5a5c"/><rect x="678.50" y="653.63" width="22.6" height="3.48" fill="#fe5a5c"/><rect x="710.55" y="633.58" width="22.6" height="3.07" fill="#fe5a5c"/><rect x="742.60" y="632.83" width="22.6" height="2.90" fill="#fe5a5c"/><rect x="774.65" y="657.94" width="22.6" height="2.82" fill="#fe5a5c"/><rect x="806.70" y="649.07" width="22.6" height="4.56" fill="#fe5a5c"/><rect x="838.75" y="649.07" width="22.6" height="3.73" fill="#fe5a5c"/><rect x="870.80" y="652.80" width="22.6" height="3.48" fill="#fe5a5c"/><rect x="902.85" y="649.90" width="22.6" height="2.90" fill="#fe5a5c"/><rect x="934.90" y="639.88" width="22.6" height="3.98" fill="#fe5a5c"/><rect x="966.95" y="651.72" width="22.6" height="3.65" fill="#fe5a5c"/><rect x="999.00" y="655.37" width="22.6" height="3.98" fill="#fe5a5c"/><rect x="1031.05" y="644.35" width="22.6" height="5.22" fill="#fe5a5c"/><rect x="1063.10" y="649.90" width="22.6" height="4.31" fill="#fe5a5c"/><rect x="1095.15" y="638.22" width="22.6" height="2.73" fill="#fe5a5c"/><rect x="1127.20" y="649.07" width="22.6" height="4.56" fill="#fe5a5c"/><rect x="1159.25" y="644.76" width="22.6" height="3.40" fill="#fe5a5c"/><rect x="1191.30" y="643.85" width="22.6" height="5.22" fill="#fe5a5c"/><rect x="1223.35" y="640.04" width="22.6" height="5.55" fill="#fe5a5c"/><rect x="1255.40" y="645.59" width="22.6" height="4.31" fill="#fe5a5c"/><rect x="1287.45" y="634.74" width="22.6" height="4.31" fill="#fe5a5c"/><rect x="1319.50" y="656.45" width="22.6" height="3.23" fill="#fe5a5c"/><rect x="1351.55" y="644.76" width="22.6" height="4.31" fill="#fe5a5c"/><rect x="1383.60" y="651.89" width="22.6" height="3.48" fill="#fe5a5c"/><rect x="1415.65" y="649.90" width="22.6" height="4.31" fill="#fe5a5c"/><rect x="1447.70" y="642.94" width="22.6" height="4.31" fill="#fe5a5c"/><rect x="1479.75" y="649.07" width="22.6" height="3.73" fill="#fe5a5c"/><rect x="1511.80" y="651.89" width="22.6" height="3.56" fill="#fe5a5c"/><rect x="1543.85" y="643.69" width="22.6" height="2.65" fill="#fe5a5c"/><rect x="1575.90" y="649.98" width="22.6" height="1.82" fill="#fe5a5c"/><rect x="1607.95" y="643.60" width="22.6" height="3.73" fill="#fe5a5c"/><rect x="1640.00" y="644.02" width="22.6" height="3.31" fill="#fe5a5c"/><rect x="1672.05" y="646.25" width="22.6" height="2.90" fill="#fe5a5c"/><rect x="1704.10" y="649.15" width="22.6" height="3.73" fill="#fe5a5c"/><rect x="1736.15" y="707.90" width="22.6" height="1.82" fill="#fe5a5c"/></svg><div class="t" style="top:714.69px;font-size:9.7px;line-height:9.7px;color:#666;left:335.90px;width:40px;text-align:right;">0</div><div class="t" style="top:714.69px;font-size:9.7px;line-height:9.7px;color:#666;left:1773.80px;">0 %</div><div class="t" style="top:673.26px;font-size:9.7px;line-height:9.7px;color:#666;left:335.90px;width:40px;text-align:right;">50</div><div class="t" style="top:673.26px;font-size:9.7px;line-height:9.7px;color:#666;left:1773.80px;">50 %</div><div class="t" style="top:631.84px;font-size:9.7px;line-height:9.7px;color:#666;left:335.90px;width:40px;text-align:right;">100</div><div class="t" style="top:631.84px;font-size:9.7px;line-height:9.7px;color:#666;left:1773.80px;">100 %</div><div class="t" style="top:590.41px;font-size:9.7px;line-height:9.7px;color:#666;left:335.90px;width:40px;text-align:right;">150</div><div class="t" style="top:590.41px;font-size:9.7px;line-height:9.7px;color:#666;left:1773.80px;">150 %</div><div class="t" style="top:548.99px;font-size:9.7px;line-height:9.7px;color:#666;left:335.90px;width:40px;text-align:right;">200</div><div class="t" style="top:548.99px;font-size:9.7px;line-height:9.7px;color:#666;left:1773.80px;">200 %</div><div class="t" style="left:284px;top:627px;width:120px;height:18px;font-size:14.2px;line-height:18px;color:#666;text-align:center;transform:rotate(-90deg);">Zeit in Stunden</div><div class="t" style="left:1755px;top:627.3px;width:120px;height:18px;font-size:14px;line-height:18px;color:#666;text-align:center;transform:rotate(90deg);">Auslastung %</div><div class="t" style="top:730.17px;font-size:9.6px;line-height:9.6px;color:#666;left:371.35px;width:60px;text-align:center;">KW01 24</div><div class="t" style="top:746.57px;font-size:9.6px;line-height:9.6px;color:#666;left:403.40px;width:60px;text-align:center;">KW02 24</div><div class="t" style="top:730.17px;font-size:9.6px;line-height:9.6px;color:#666;left:435.45px;width:60px;text-align:center;">KW03 24</div><div class="t" style="top:746.57px;font-size:9.6px;line-height:9.6px;color:#666;left:467.50px;width:60px;text-align:center;">KW04 24</div><div class="t" style="top:730.17px;font-size:9.6px;line-height:9.6px;color:#666;left:499.55px;width:60px;text-align:center;">KW05 24</div><div class="t" style="top:746.57px;font-size:9.6px;line-height:9.6px;color:#666;left:531.60px;width:60px;text-align:center;">KW06 24</div><div class="t" style="top:730.17px;font-size:9.6px;line-height:9.6px;color:#666;left:563.65px;width:60px;text-align:center;">KW07 24</div><div class="t" style="top:746.57px;font-size:9.6px;line-height:9.6px;color:#666;left:595.70px;width:60px;text-align:center;">KW08 24</div><div class="t" style="top:730.17px;font-size:9.6px;line-height:9.6px;color:#666;left:627.75px;width:60px;text-align:center;">KW09 24</div><div class="t" style="top:746.57px;font-size:9.6px;line-height:9.6px;color:#666;left:659.80px;width:60px;text-align:center;">KW10 24</div><div class="t" style="top:730.17px;font-size:9.6px;line-height:9.6px;color:#666;left:691.85px;width:60px;text-align:center;">KW11 24</div><div class="t" style="top:746.57px;font-size:9.6px;line-height:9.6px;color:#666;left:723.90px;width:60px;text-align:center;">KW12 24</div><div class="t" style="top:730.17px;font-size:9.6px;line-height:9.6px;color:#666;left:755.95px;width:60px;text-align:center;">KW13 24</div><div class="t" style="top:746.57px;font-size:9.6px;line-height:9.6px;color:#666;left:788.00px;width:60px;text-align:center;">KW14 24</div><div class="t" style="top:730.17px;font-size:9.6px;line-height:9.6px;color:#666;left:820.05px;width:60px;text-align:center;">KW15 24</div><div class="t" style="top:746.57px;font-size:9.6px;line-height:9.6px;color:#666;left:852.10px;width:60px;text-align:center;">KW16 24</div><div class="t" style="top:730.17px;font-size:9.6px;line-height:9.6px;color:#666;left:884.15px;width:60px;text-align:center;">KW17 24</div><div class="t" style="top:746.57px;font-size:9.6px;line-height:9.6px;color:#666;left:916.20px;width:60px;text-align:center;">KW18 24</div><div class="t" style="top:730.17px;font-size:9.6px;line-height:9.6px;color:#666;left:948.25px;width:60px;text-align:center;">KW19 24</div><div class="t" style="top:746.57px;font-size:9.6px;line-height:9.6px;color:#666;left:980.30px;width:60px;text-align:center;">KW20 24</div><div class="t" style="top:730.17px;font-size:9.6px;line-height:9.6px;color:#666;left:1012.35px;width:60px;text-align:center;">KW21 24</div><div class="t" style="top:746.57px;font-size:9.6px;line-height:9.6px;color:#666;left:1044.40px;width:60px;text-align:center;">KW22 24</div><div class="t" style="top:730.17px;font-size:9.6px;line-height:9.6px;color:#666;left:1076.45px;width:60px;text-align:center;">KW23 24</div><div class="t" style="top:746.57px;font-size:9.6px;line-height:9.6px;color:#666;left:1108.50px;width:60px;text-align:center;">KW24 24</div><div class="t" style="top:730.17px;font-size:9.6px;line-height:9.6px;color:#666;left:1140.55px;width:60px;text-align:center;">KW25 24</div><div class="t" style="top:746.57px;font-size:9.6px;line-height:9.6px;color:#666;left:1172.60px;width:60px;text-align:center;">KW26 24</div><div class="t" style="top:730.17px;font-size:9.6px;line-height:9.6px;color:#666;left:1204.65px;width:60px;text-align:center;">KW27 24</div><div class="t" style="top:746.57px;font-size:9.6px;line-height:9.6px;color:#666;left:1236.70px;width:60px;text-align:center;">KW28 24</div><div class="t" style="top:730.17px;font-size:9.6px;line-height:9.6px;color:#666;left:1268.75px;width:60px;text-align:center;">KW29 24</div><div class="t" style="top:746.57px;font-size:9.6px;line-height:9.6px;color:#666;left:1300.80px;width:60px;text-align:center;">KW30 24</div><div class="t" style="top:730.17px;font-size:9.6px;line-height:9.6px;color:#666;left:1332.85px;width:60px;text-align:center;">KW31 24</div><div class="t" style="top:746.57px;font-size:9.6px;line-height:9.6px;color:#666;left:1364.90px;width:60px;text-align:center;">KW32 24</div><div class="t" style="top:730.17px;font-size:9.6px;line-height:9.6px;color:#666;left:1396.95px;width:60px;text-align:center;">KW33 24</div><div class="t" style="top:746.57px;font-size:9.6px;line-height:9.6px;color:#666;left:1429.00px;width:60px;text-align:center;">KW34 24</div><div class="t" style="top:730.17px;font-size:9.6px;line-height:9.6px;color:#666;left:1461.05px;width:60px;text-align:center;">KW35 24</div><div class="t" style="top:746.57px;font-size:9.6px;line-height:9.6px;color:#666;left:1493.10px;width:60px;text-align:center;">KW36 24</div><div class="t" style="top:730.17px;font-size:9.6px;line-height:9.6px;color:#666;left:1525.15px;width:60px;text-align:center;">KW37 24</div><div class="t" style="top:746.57px;font-size:9.6px;line-height:9.6px;color:#666;left:1557.20px;width:60px;text-align:center;">KW38 24</div><div class="t" style="top:730.17px;font-size:9.6px;line-height:9.6px;color:#666;left:1589.25px;width:60px;text-align:center;">KW39 24</div><div class="t" style="top:746.57px;font-size:9.6px;line-height:9.6px;color:#666;left:1621.30px;width:60px;text-align:center;">KW40 24</div><div class="t" style="top:730.17px;font-size:9.6px;line-height:9.6px;color:#666;left:1653.35px;width:60px;text-align:center;">KW41 24</div><div class="t" style="top:746.57px;font-size:9.6px;line-height:9.6px;color:#666;left:1685.40px;width:60px;text-align:center;">KW42 24</div><div class="t" style="top:730.17px;font-size:9.6px;line-height:9.6px;color:#666;left:1717.45px;width:60px;text-align:center;">KW43 24</div><div class="r" style="left:1371.8px;top:525.8px;width:11.0px;height:10.800000000000068px;background:#ededed;"></div><div class="t" style="top:525.74px;font-size:10.7px;line-height:10.7px;color:#666;left:1389.10px;">Sprechzeiten</div><div class="r" style="left:1470.2px;top:525.8px;width:11.0px;height:10.800000000000068px;background:#40c4fe;"></div><div class="t" style="top:525.74px;font-size:10.7px;line-height:10.7px;color:#666;left:1487.50px;">Durchgeführte/Geplante Termine</div><div class="r" style="left:1664px;top:525.8px;width:11px;height:10.800000000000068px;background:#0c6bb5;"></div><div class="t" style="top:525.74px;font-size:10.7px;line-height:10.7px;color:#666;left:1681.30px;">Auslastung %</div><div class="r" style="left:1764px;top:525.8px;width:11px;height:10.800000000000068px;background:#fe5a5c;"></div><div class="t" style="top:525.74px;font-size:10.7px;line-height:10.7px;color:#666;left:1781.30px;">Ausfall</div><div class="r" style="left:304px;top:795.5px;width:776.7px;height:304.0999999999999px;background:#ffffff;border-radius:4px;box-shadow:0 0 6px rgba(40,55,80,0.085), 0 0.5px 1.5px rgba(0,0,0,0.10);"></div><div class="t" style="top:806.87px;font-size:10.9px;line-height:10.9px;color:#3a3a3a;font-weight:bold;left:314.50px;">Übersicht</div><div class="t" style="top:846.99px;font-size:11px;line-height:11px;color:#5e5e5e;font-weight:bold;left:324.60px;">Woche</div><div class="t" style="top:846.99px;font-size:11px;line-height:11px;color:#5e5e5e;font-weight:bold;left:449.00px;">Kalender</div><div class="t" style="top:846.99px;font-size:11px;line-height:11px;color:#5e5e5e;font-weight:bold;left:518.90px;width:200px;text-align:right;">Sprechzeiten</div><div class="t" style="top:846.99px;font-size:11px;line-height:11px;color:#5e5e5e;font-weight:bold;left:651.30px;width:300px;text-align:right;">durchgeführte/geplante Termine</div><div class="t" style="top:846.99px;font-size:11px;line-height:11px;color:#5e5e5e;font-weight:bold;left:1010.70px;width:50px;text-align:right;">%</div><div class="r" style="left:314.5px;top:869px;width:756.3px;height:1px;background:#dcdcdc;"></div><div class="r" style="left:314.5px;top:870px;width:756.3px;height:28.600000000000023px;background:#f2f5f8;"></div><svg style="left:0;top:0" width="1920" height="1218" viewBox="0 0 1920 1218"><circle cx="327.5" cy="884.2" r="3.9" stroke="#8a8a8a" stroke-width="1.3" fill="none"/><path d="M330.4 887.1 L334.1 890.6" stroke="#8a8a8a" stroke-width="1.4"/><circle cx="452.2" cy="884.2" r="3.9" stroke="#8a8a8a" stroke-width="1.3" fill="none"/><path d="M455.09999999999997 887.1 L458.8 890.6" stroke="#8a8a8a" stroke-width="1.4"/><circle cx="607.3" cy="884.2" r="3.9" stroke="#8a8a8a" stroke-width="1.3" fill="none"/><path d="M610.1999999999999 887.1 L613.9 890.6" stroke="#8a8a8a" stroke-width="1.4"/><circle cx="742.6" cy="884.2" r="3.9" stroke="#8a8a8a" stroke-width="1.3" fill="none"/><path d="M745.5 887.1 L749.2 890.6" stroke="#8a8a8a" stroke-width="1.4"/><circle cx="975.3" cy="884.2" r="3.9" stroke="#8a8a8a" stroke-width="1.3" fill="none"/><path d="M978.1999999999999 887.1 L981.9 890.6" stroke="#8a8a8a" stroke-width="1.4"/></svg><div class="t" style="top:910.63px;font-size:11.3px;line-height:11.3px;color:#5db246;left:324.60px;">KW01 24</div><div class="t" style="top:910.47px;font-size:11.5px;line-height:11.5px;color:#5db246;left:449.00px;">Dr. James</div><div class="t" style="top:910.63px;font-size:11.3px;line-height:11.3px;color:#5db246;left:658.90px;width:60px;text-align:right;">5</div><div class="t" style="top:910.63px;font-size:11.3px;line-height:11.3px;color:#5db246;left:891.30px;width:60px;text-align:right;">9</div><div class="t" style="top:910.89px;font-size:11px;line-height:11px;color:#5db246;left:980.70px;width:80px;text-align:right;">180,1 %</div><div class="r" style="left:314.5px;top:931.8px;width:756.3px;height:33.200000000000045px;background:#f4f4f4;"></div><div class="t" style="top:943.83px;font-size:11.3px;line-height:11.3px;color:#e02f45;left:324.60px;">KW01 24</div><div class="t" style="top:943.67px;font-size:11.5px;line-height:11.5px;color:#e02f45;left:449.00px;">Dr. Mustermann</div><div class="t" style="top:943.83px;font-size:11.3px;line-height:11.3px;color:#e02f45;left:658.90px;width:60px;text-align:right;">16</div><div class="t" style="top:943.83px;font-size:11.3px;line-height:11.3px;color:#e02f45;left:891.30px;width:60px;text-align:right;">10</div><div class="t" style="top:944.09px;font-size:11px;line-height:11px;color:#e02f45;left:980.70px;width:80px;text-align:right;">67,0 %</div><div class="t" style="top:977.03px;font-size:11.3px;line-height:11.3px;color:#5db246;left:324.60px;">KW01 24</div><div class="t" style="top:976.87px;font-size:11.5px;line-height:11.5px;color:#5db246;left:449.00px;">Dr. Nowak</div><div class="t" style="top:977.03px;font-size:11.3px;line-height:11.3px;color:#5db246;left:658.90px;width:60px;text-align:right;">10</div><div class="t" style="top:977.03px;font-size:11.3px;line-height:11.3px;color:#5db246;left:891.30px;width:60px;text-align:right;">14</div><div class="t" style="top:977.29px;font-size:11px;line-height:11px;color:#5db246;left:980.70px;width:80px;text-align:right;">139,8 %</div><div class="r" style="left:314.5px;top:998.2px;width:756.3px;height:33.200000000000045px;background:#f4f4f4;"></div><div class="t" style="top:1010.23px;font-size:11.3px;line-height:11.3px;color:#5db246;left:324.60px;">KW01 24</div><div class="t" style="top:1010.07px;font-size:11.5px;line-height:11.5px;color:#5db246;left:449.00px;">Dr. Schmidt</div><div class="t" style="top:1010.23px;font-size:11.3px;line-height:11.3px;color:#5db246;left:658.90px;width:60px;text-align:right;">5</div><div class="t" style="top:1010.23px;font-size:11.3px;line-height:11.3px;color:#5db246;left:891.30px;width:60px;text-align:right;">13</div><div class="t" style="top:1010.49px;font-size:11px;line-height:11px;color:#5db246;left:980.70px;width:80px;text-align:right;">287,5 %</div><div class="t" style="top:1043.43px;font-size:11.3px;line-height:11.3px;color:#5db246;left:324.60px;">KW01 24</div><div class="t" style="top:1043.27px;font-size:11.5px;line-height:11.5px;color:#5db246;left:449.00px;">Dr. Trewin</div><div class="t" style="top:1043.43px;font-size:11.3px;line-height:11.3px;color:#5db246;left:658.90px;width:60px;text-align:right;">5</div><div class="t" style="top:1043.43px;font-size:11.3px;line-height:11.3px;color:#5db246;left:891.30px;width:60px;text-align:right;">11</div><div class="t" style="top:1043.69px;font-size:11px;line-height:11px;color:#5db246;left:980.70px;width:80px;text-align:right;">200,0 %</div><div class="r" style="left:314.5px;top:1064.6px;width:756.3px;height:25.700000000000045px;background:#f4f4f4;"></div><div class="t" style="top:1076.63px;font-size:11.3px;line-height:11.3px;color:#e02f45;left:324.60px;">KW01 24</div><div class="t" style="top:1076.47px;font-size:11.5px;line-height:11.5px;color:#e02f45;left:449.00px;">Dr. Vordenbäumen</div><div class="t" style="top:1076.63px;font-size:11.3px;line-height:11.3px;color:#e02f45;left:658.90px;width:60px;text-align:right;">20</div><div class="t" style="top:1076.63px;font-size:11.3px;line-height:11.3px;color:#e02f45;left:891.30px;width:60px;text-align:right;">15</div><div class="t" style="top:1076.89px;font-size:11px;line-height:11px;color:#e02f45;left:980.70px;width:80px;text-align:right;">73,5 %</div><div class="r" style="left:1088px;top:796.2px;width:766.7px;height:303.70000000000005px;background:#ffffff;border-radius:4px;box-shadow:0 0 6px rgba(40,55,80,0.085), 0 0.5px 1.5px rgba(0,0,0,0.10);"></div><div class="t" style="top:806.30px;font-size:11.1px;line-height:11.1px;color:#3a3a3a;font-weight:bold;left:1098.70px;">Gerettete Termine</div><svg style="left:0;top:0" width="1920" height="1218" viewBox="0 0 1920 1218"><rect x="1167.30" y="961.94" width="10.6" height="56.56" rx="2" fill="#013a66"/><path d="M1167.30 1011.33 h10.6 v5.17 q0 2 -2 2 h-6.6 q-2 0 -2 -2 Z" fill="#35a8f4"/><rect x="1182.64" y="937.59" width="10.6" height="80.91" rx="2" fill="#013a66"/><path d="M1182.64 1007.27 h10.6 v9.23 q0 2 -2 2 h-6.6 q-2 0 -2 -2 Z" fill="#35a8f4"/><rect x="1197.98" y="940.30" width="10.6" height="78.20" rx="2" fill="#013a66"/><path d="M1197.98 1001.99 h10.6 v14.51 q0 2 -2 2 h-6.6 q-2 0 -2 -2 Z" fill="#35a8f4"/><rect x="1213.32" y="921.08" width="10.6" height="97.42" rx="2" fill="#013a66"/><path d="M1213.32 1001.99 h10.6 v14.51 q0 2 -2 2 h-6.6 q-2 0 -2 -2 Z" fill="#35a8f4"/><rect x="1228.66" y="931.77" width="10.6" height="86.73" rx="2" fill="#013a66"/><path d="M1228.66 1007.27 h10.6 v9.23 q0 2 -2 2 h-6.6 q-2 0 -2 -2 Z" fill="#35a8f4"/><rect x="1244.00" y="961.13" width="10.6" height="57.37" rx="2" fill="#013a66"/><path d="M1244.00 1013.63 h10.6 v2.87 q0 2 -2 2 h-6.6 q-2 0 -2 -2 Z" fill="#35a8f4"/><rect x="1259.34" y="911.75" width="10.6" height="106.75" rx="2" fill="#013a66"/><path d="M1259.34 983.32 h10.6 v33.18 q0 2 -2 2 h-6.6 q-2 0 -2 -2 Z" fill="#35a8f4"/><rect x="1274.68" y="947.20" width="10.6" height="71.30" rx="2" fill="#013a66"/><path d="M1274.68 1016.61 h10.6 v-0.11 q0 2 -2 2 h-6.6 q-2 0 -2 -2 Z" fill="#35a8f4"/><rect x="1290.02" y="927.85" width="10.6" height="90.65" rx="2" fill="#013a66"/><path d="M1290.02 983.32 h10.6 v33.18 q0 2 -2 2 h-6.6 q-2 0 -2 -2 Z" fill="#35a8f4"/><rect x="1305.36" y="947.20" width="10.6" height="71.30" rx="2" fill="#013a66"/><path d="M1305.36 1005.65 h10.6 v10.85 q0 2 -2 2 h-6.6 q-2 0 -2 -2 Z" fill="#35a8f4"/><rect x="1320.70" y="925.55" width="10.6" height="92.95" rx="2" fill="#013a66"/><path d="M1320.70 989.68 h10.6 v26.82 q0 2 -2 2 h-6.6 q-2 0 -2 -2 Z" fill="#35a8f4"/><rect x="1336.04" y="943.81" width="10.6" height="74.69" rx="2" fill="#013a66"/><path d="M1336.04 1004.56 h10.6 v11.94 q0 2 -2 2 h-6.6 q-2 0 -2 -2 Z" fill="#35a8f4"/><rect x="1351.38" y="968.30" width="10.6" height="50.20" rx="2" fill="#013a66"/><path d="M1351.38 1008.35 h10.6 v8.15 q0 2 -2 2 h-6.6 q-2 0 -2 -2 Z" fill="#35a8f4"/><rect x="1366.72" y="977.10" width="10.6" height="41.40" rx="2" fill="#013a66"/><path d="M1366.72 1014.44 h10.6 v2.06 q0 2 -2 2 h-6.6 q-2 0 -2 -2 Z" fill="#35a8f4"/><rect x="1382.06" y="956.53" width="10.6" height="61.97" rx="2" fill="#013a66"/><path d="M1382.06 1011.33 h10.6 v5.17 q0 2 -2 2 h-6.6 q-2 0 -2 -2 Z" fill="#35a8f4"/><rect x="1397.40" y="928.53" width="10.6" height="89.97" rx="2" fill="#013a66"/><path d="M1397.40 983.86 h10.6 v32.64 q0 2 -2 2 h-6.6 q-2 0 -2 -2 Z" fill="#35a8f4"/><rect x="1412.74" y="935.02" width="10.6" height="83.48" rx="2" fill="#013a66"/><path d="M1412.74 1009.71 h10.6 v6.79 q0 2 -2 2 h-6.6 q-2 0 -2 -2 Z" fill="#35a8f4"/><rect x="1428.08" y="915.67" width="10.6" height="102.83" rx="2" fill="#013a66"/><path d="M1428.08 1010.38 h10.6 v6.12 q0 2 -2 2 h-6.6 q-2 0 -2 -2 Z" fill="#35a8f4"/><rect x="1443.42" y="961.13" width="10.6" height="57.37" rx="2" fill="#013a66"/><path d="M1443.42 1008.35 h10.6 v8.15 q0 2 -2 2 h-6.6 q-2 0 -2 -2 Z" fill="#35a8f4"/><rect x="1458.76" y="925.55" width="10.6" height="92.95" rx="2" fill="#013a66"/><path d="M1458.76 1003.75 h10.6 v12.75 q0 2 -2 2 h-6.6 q-2 0 -2 -2 Z" fill="#35a8f4"/><rect x="1474.10" y="945.98" width="10.6" height="72.52" rx="2" fill="#013a66"/><path d="M1474.10 1014.04 h10.6 v2.46 q0 2 -2 2 h-6.6 q-2 0 -2 -2 Z" fill="#35a8f4"/><rect x="1489.44" y="937.73" width="10.6" height="80.77" rx="2" fill="#013a66"/><path d="M1489.44 1012.28 h10.6 v4.22 q0 2 -2 2 h-6.6 q-2 0 -2 -2 Z" fill="#35a8f4"/><rect x="1504.78" y="924.87" width="10.6" height="93.63" rx="2" fill="#013a66"/><path d="M1504.78 1007.00 h10.6 v9.50 q0 2 -2 2 h-6.6 q-2 0 -2 -2 Z" fill="#35a8f4"/><rect x="1520.12" y="938.67" width="10.6" height="79.83" rx="2" fill="#013a66"/><path d="M1520.12 1015.79 h10.6 v0.71 q0 2 -2 2 h-6.6 q-2 0 -2 -2 Z" fill="#35a8f4"/><rect x="1535.46" y="938.67" width="10.6" height="79.83" rx="2" fill="#013a66"/><path d="M1535.46 995.90 h10.6 v20.60 q0 2 -2 2 h-6.6 q-2 0 -2 -2 Z" fill="#35a8f4"/><rect x="1550.80" y="943.81" width="10.6" height="74.69" rx="2" fill="#013a66"/><path d="M1550.80 995.23 h10.6 v21.27 q0 2 -2 2 h-6.6 q-2 0 -2 -2 Z" fill="#35a8f4"/><rect x="1566.14" y="937.73" width="10.6" height="80.77" rx="2" fill="#013a66"/><path d="M1566.14 1002.94 h10.6 v13.56 q0 2 -2 2 h-6.6 q-2 0 -2 -2 Z" fill="#35a8f4"/><rect x="1581.48" y="917.16" width="10.6" height="101.34" rx="2" fill="#013a66"/><path d="M1581.48 999.02 h10.6 v17.48 q0 2 -2 2 h-6.6 q-2 0 -2 -2 Z" fill="#35a8f4"/><rect x="1596.82" y="934.21" width="10.6" height="84.29" rx="2" fill="#013a66"/><path d="M1596.82 1011.33 h10.6 v5.17 q0 2 -2 2 h-6.6 q-2 0 -2 -2 Z" fill="#35a8f4"/><rect x="1612.16" y="971.96" width="10.6" height="46.54" rx="2" fill="#013a66"/><path d="M1612.16 1015.79 h10.6 v0.71 q0 2 -2 2 h-6.6 q-2 0 -2 -2 Z" fill="#35a8f4"/><rect x="1627.50" y="948.69" width="10.6" height="69.81" rx="2" fill="#013a66"/><path d="M1627.50 1008.49 h10.6 v8.01 q0 2 -2 2 h-6.6 q-2 0 -2 -2 Z" fill="#35a8f4"/><rect x="1642.84" y="964.79" width="10.6" height="53.71" rx="2" fill="#013a66"/><rect x="1658.18" y="912.56" width="10.6" height="105.94" rx="2" fill="#013a66"/><path d="M1658.18 1002.94 h10.6 v13.56 q0 2 -2 2 h-6.6 q-2 0 -2 -2 Z" fill="#35a8f4"/><rect x="1673.52" y="950.17" width="10.6" height="68.33" rx="2" fill="#013a66"/><path d="M1673.52 999.56 h10.6 v16.94 q0 2 -2 2 h-6.6 q-2 0 -2 -2 Z" fill="#35a8f4"/><rect x="1688.86" y="957.48" width="10.6" height="61.02" rx="2" fill="#013a66"/><path d="M1688.86 1012.28 h10.6 v4.22 q0 2 -2 2 h-6.6 q-2 0 -2 -2 Z" fill="#35a8f4"/><rect x="1704.20" y="915.40" width="10.6" height="103.10" rx="2" fill="#013a66"/><path d="M1704.20 994.15 h10.6 v22.35 q0 2 -2 2 h-6.6 q-2 0 -2 -2 Z" fill="#35a8f4"/><rect x="1719.54" y="917.84" width="10.6" height="100.66" rx="2" fill="#013a66"/><path d="M1719.54 1002.53 h10.6 v13.97 q0 2 -2 2 h-6.6 q-2 0 -2 -2 Z" fill="#35a8f4"/><rect x="1734.88" y="937.73" width="10.6" height="80.77" rx="2" fill="#013a66"/><path d="M1734.88 1014.04 h10.6 v2.46 q0 2 -2 2 h-6.6 q-2 0 -2 -2 Z" fill="#35a8f4"/><rect x="1750.22" y="937.73" width="10.6" height="80.77" rx="2" fill="#013a66"/><path d="M1750.22 999.02 h10.6 v17.48 q0 2 -2 2 h-6.6 q-2 0 -2 -2 Z" fill="#35a8f4"/><rect x="1765.56" y="937.73" width="10.6" height="80.77" rx="2" fill="#013a66"/><path d="M1765.56 1010.25 h10.6 v6.25 q0 2 -2 2 h-6.6 q-2 0 -2 -2 Z" fill="#35a8f4"/><rect x="1780.90" y="943.81" width="10.6" height="74.69" rx="2" fill="#013a66"/><path d="M1780.90 1014.71 h10.6 v1.79 q0 2 -2 2 h-6.6 q-2 0 -2 -2 Z" fill="#35a8f4"/><rect x="1796.24" y="935.97" width="10.6" height="82.53" rx="2" fill="#013a66"/><path d="M1796.24 1004.16 h10.6 v12.34 q0 2 -2 2 h-6.6 q-2 0 -2 -2 Z" fill="#35a8f4"/><rect x="1811.58" y="1015.12" width="10.6" height="3.38" rx="2" fill="#013a66"/></svg><div class="t" style="top:1014.89px;font-size:9.7px;line-height:9.7px;color:#666;left:1124.20px;width:30px;text-align:right;">0</div><div class="t" style="top:981.06px;font-size:9.7px;line-height:9.7px;color:#666;left:1124.20px;width:30px;text-align:right;">3</div><div class="t" style="top:947.24px;font-size:9.7px;line-height:9.7px;color:#666;left:1124.20px;width:30px;text-align:right;">5</div><div class="t" style="top:913.41px;font-size:9.7px;line-height:9.7px;color:#666;left:1124.20px;width:30px;text-align:right;">8</div><div class="t" style="top:879.59px;font-size:9.7px;line-height:9.7px;color:#666;left:1124.20px;width:30px;text-align:right;">10</div><div class="t" style="left:1068px;top:942.8px;width:120px;height:18px;font-size:14px;line-height:18px;color:#666;text-align:center;transform:rotate(-90deg);">Zeit in Stunden</div><div class="t" style="left:1142.60px;top:1043.00px;width:60px;height:12px;font-size:9.6px;line-height:12px;color:#666;text-align:center;transform:rotate(-90deg);">KW01 24</div><div class="t" style="left:1157.94px;top:1043.00px;width:60px;height:12px;font-size:9.6px;line-height:12px;color:#666;text-align:center;transform:rotate(-90deg);">KW02 24</div><div class="t" style="left:1173.28px;top:1043.00px;width:60px;height:12px;font-size:9.6px;line-height:12px;color:#666;text-align:center;transform:rotate(-90deg);">KW03 24</div><div class="t" style="left:1188.62px;top:1043.00px;width:60px;height:12px;font-size:9.6px;line-height:12px;color:#666;text-align:center;transform:rotate(-90deg);">KW04 24</div><div class="t" style="left:1203.96px;top:1043.00px;width:60px;height:12px;font-size:9.6px;line-height:12px;color:#666;text-align:center;transform:rotate(-90deg);">KW05 24</div><div class="t" style="left:1219.30px;top:1043.00px;width:60px;height:12px;font-size:9.6px;line-height:12px;color:#666;text-align:center;transform:rotate(-90deg);">KW06 24</div><div class="t" style="left:1234.64px;top:1043.00px;width:60px;height:12px;font-size:9.6px;line-height:12px;color:#666;text-align:center;transform:rotate(-90deg);">KW07 24</div><div class="t" style="left:1249.98px;top:1043.00px;width:60px;height:12px;font-size:9.6px;line-height:12px;color:#666;text-align:center;transform:rotate(-90deg);">KW08 24</div><div class="t" style="left:1265.32px;top:1043.00px;width:60px;height:12px;font-size:9.6px;line-height:12px;color:#666;text-align:center;transform:rotate(-90deg);">KW09 24</div><div class="t" style="left:1280.66px;top:1043.00px;width:60px;height:12px;font-size:9.6px;line-height:12px;color:#666;text-align:center;transform:rotate(-90deg);">KW10 24</div><div class="t" style="left:1296.00px;top:1043.00px;width:60px;height:12px;font-size:9.6px;line-height:12px;color:#666;text-align:center;transform:rotate(-90deg);">KW11 24</div><div class="t" style="left:1311.34px;top:1043.00px;width:60px;height:12px;font-size:9.6px;line-height:12px;color:#666;text-align:center;transform:rotate(-90deg);">KW12 24</div><div class="t" style="left:1326.68px;top:1043.00px;width:60px;height:12px;font-size:9.6px;line-height:12px;color:#666;text-align:center;transform:rotate(-90deg);">KW13 24</div><div class="t" style="left:1342.02px;top:1043.00px;width:60px;height:12px;font-size:9.6px;line-height:12px;color:#666;text-align:center;transform:rotate(-90deg);">KW14 24</div><div class="t" style="left:1357.36px;top:1043.00px;width:60px;height:12px;font-size:9.6px;line-height:12px;color:#666;text-align:center;transform:rotate(-90deg);">KW15 24</div><div class="t" style="left:1372.70px;top:1043.00px;width:60px;height:12px;font-size:9.6px;line-height:12px;color:#666;text-align:center;transform:rotate(-90deg);">KW16 24</div><div class="t" style="left:1388.04px;top:1043.00px;width:60px;height:12px;font-size:9.6px;line-height:12px;color:#666;text-align:center;transform:rotate(-90deg);">KW17 24</div><div class="t" style="left:1403.38px;top:1043.00px;width:60px;height:12px;font-size:9.6px;line-height:12px;color:#666;text-align:center;transform:rotate(-90deg);">KW18 24</div><div class="t" style="left:1418.72px;top:1043.00px;width:60px;height:12px;font-size:9.6px;line-height:12px;color:#666;text-align:center;transform:rotate(-90deg);">KW19 24</div><div class="t" style="left:1434.06px;top:1043.00px;width:60px;height:12px;font-size:9.6px;line-height:12px;color:#666;text-align:center;transform:rotate(-90deg);">KW20 24</div><div class="t" style="left:1449.40px;top:1043.00px;width:60px;height:12px;font-size:9.6px;line-height:12px;color:#666;text-align:center;transform:rotate(-90deg);">KW21 24</div><div class="t" style="left:1464.74px;top:1043.00px;width:60px;height:12px;font-size:9.6px;line-height:12px;color:#666;text-align:center;transform:rotate(-90deg);">KW22 24</div><div class="t" style="left:1480.08px;top:1043.00px;width:60px;height:12px;font-size:9.6px;line-height:12px;color:#666;text-align:center;transform:rotate(-90deg);">KW23 24</div><div class="t" style="left:1495.42px;top:1043.00px;width:60px;height:12px;font-size:9.6px;line-height:12px;color:#666;text-align:center;transform:rotate(-90deg);">KW24 24</div><div class="t" style="left:1510.76px;top:1043.00px;width:60px;height:12px;font-size:9.6px;line-height:12px;color:#666;text-align:center;transform:rotate(-90deg);">KW25 24</div><div class="t" style="left:1526.10px;top:1043.00px;width:60px;height:12px;font-size:9.6px;line-height:12px;color:#666;text-align:center;transform:rotate(-90deg);">KW26 24</div><div class="t" style="left:1541.44px;top:1043.00px;width:60px;height:12px;font-size:9.6px;line-height:12px;color:#666;text-align:center;transform:rotate(-90deg);">KW27 24</div><div class="t" style="left:1556.78px;top:1043.00px;width:60px;height:12px;font-size:9.6px;line-height:12px;color:#666;text-align:center;transform:rotate(-90deg);">KW28 24</div><div class="t" style="left:1572.12px;top:1043.00px;width:60px;height:12px;font-size:9.6px;line-height:12px;color:#666;text-align:center;transform:rotate(-90deg);">KW29 24</div><div class="t" style="left:1587.46px;top:1043.00px;width:60px;height:12px;font-size:9.6px;line-height:12px;color:#666;text-align:center;transform:rotate(-90deg);">KW30 24</div><div class="t" style="left:1602.80px;top:1043.00px;width:60px;height:12px;font-size:9.6px;line-height:12px;color:#666;text-align:center;transform:rotate(-90deg);">KW31 24</div><div class="t" style="left:1618.14px;top:1043.00px;width:60px;height:12px;font-size:9.6px;line-height:12px;color:#666;text-align:center;transform:rotate(-90deg);">KW32 24</div><div class="t" style="left:1633.48px;top:1043.00px;width:60px;height:12px;font-size:9.6px;line-height:12px;color:#666;text-align:center;transform:rotate(-90deg);">KW33 24</div><div class="t" style="left:1648.82px;top:1043.00px;width:60px;height:12px;font-size:9.6px;line-height:12px;color:#666;text-align:center;transform:rotate(-90deg);">KW34 24</div><div class="t" style="left:1664.16px;top:1043.00px;width:60px;height:12px;font-size:9.6px;line-height:12px;color:#666;text-align:center;transform:rotate(-90deg);">KW35 24</div><div class="t" style="left:1679.50px;top:1043.00px;width:60px;height:12px;font-size:9.6px;line-height:12px;color:#666;text-align:center;transform:rotate(-90deg);">KW36 24</div><div class="t" style="left:1694.84px;top:1043.00px;width:60px;height:12px;font-size:9.6px;line-height:12px;color:#666;text-align:center;transform:rotate(-90deg);">KW37 24</div><div class="t" style="left:1710.18px;top:1043.00px;width:60px;height:12px;font-size:9.6px;line-height:12px;color:#666;text-align:center;transform:rotate(-90deg);">KW38 24</div><div class="t" style="left:1725.52px;top:1043.00px;width:60px;height:12px;font-size:9.6px;line-height:12px;color:#666;text-align:center;transform:rotate(-90deg);">KW39 24</div><div class="t" style="left:1740.86px;top:1043.00px;width:60px;height:12px;font-size:9.6px;line-height:12px;color:#666;text-align:center;transform:rotate(-90deg);">KW40 24</div><div class="t" style="left:1756.20px;top:1043.00px;width:60px;height:12px;font-size:9.6px;line-height:12px;color:#666;text-align:center;transform:rotate(-90deg);">KW41 24</div><div class="t" style="left:1771.54px;top:1043.00px;width:60px;height:12px;font-size:9.6px;line-height:12px;color:#666;text-align:center;transform:rotate(-90deg);">KW42 24</div><div class="t" style="left:1786.88px;top:1043.00px;width:60px;height:12px;font-size:9.6px;line-height:12px;color:#666;text-align:center;transform:rotate(-90deg);">KW43 24</div><div class="r" style="left:1556.5px;top:856.8px;width:10.799999999999955px;height:10.800000000000068px;background:#013a66;"></div><div class="t" style="top:856.88px;font-size:10.65px;line-height:10.65px;color:#666;left:1573.80px;">Gerettete Termine</div><div class="r" style="left:1678px;top:856.8px;width:10.799999999999955px;height:10.800000000000068px;background:#35a8f4;"></div><div class="t" style="top:856.88px;font-size:10.65px;line-height:10.65px;color:#666;left:1695.30px;">Online Gerettete Termine</div><div class="t" style="top:1148.01px;font-size:11.8px;line-height:11.8px;color:#9a9fb0;left:303.00px;">2024 ©</div><div class="t" style="top:1147.84px;font-size:12px;line-height:12px;color:#50566a;left:350.00px;">cinify</div><div class="r" style="left:801.7px;top:1140px;width:450.0999999999999px;height:29.59999999999991px;background:#f2f5f8;"></div><div class="t" style="top:1149.36px;font-size:10.8px;line-height:10.8px;color:#222;left:812.00px;">Kundendemo</div><svg style="left:1235px;top:1152px" width="10" height="6" viewBox="0 0 10 6"><path d="M1 1 L9 1 L5 5 Z" fill="#666"/></svg><div class="t" style="top:1148.10px;font-size:11.7px;line-height:11.7px;color:#50566a;left:1556.00px;width:300px;text-align:right;">Impressum | Datenschutzerklärung</div>
<!--CHARTS-->
</body></html>
